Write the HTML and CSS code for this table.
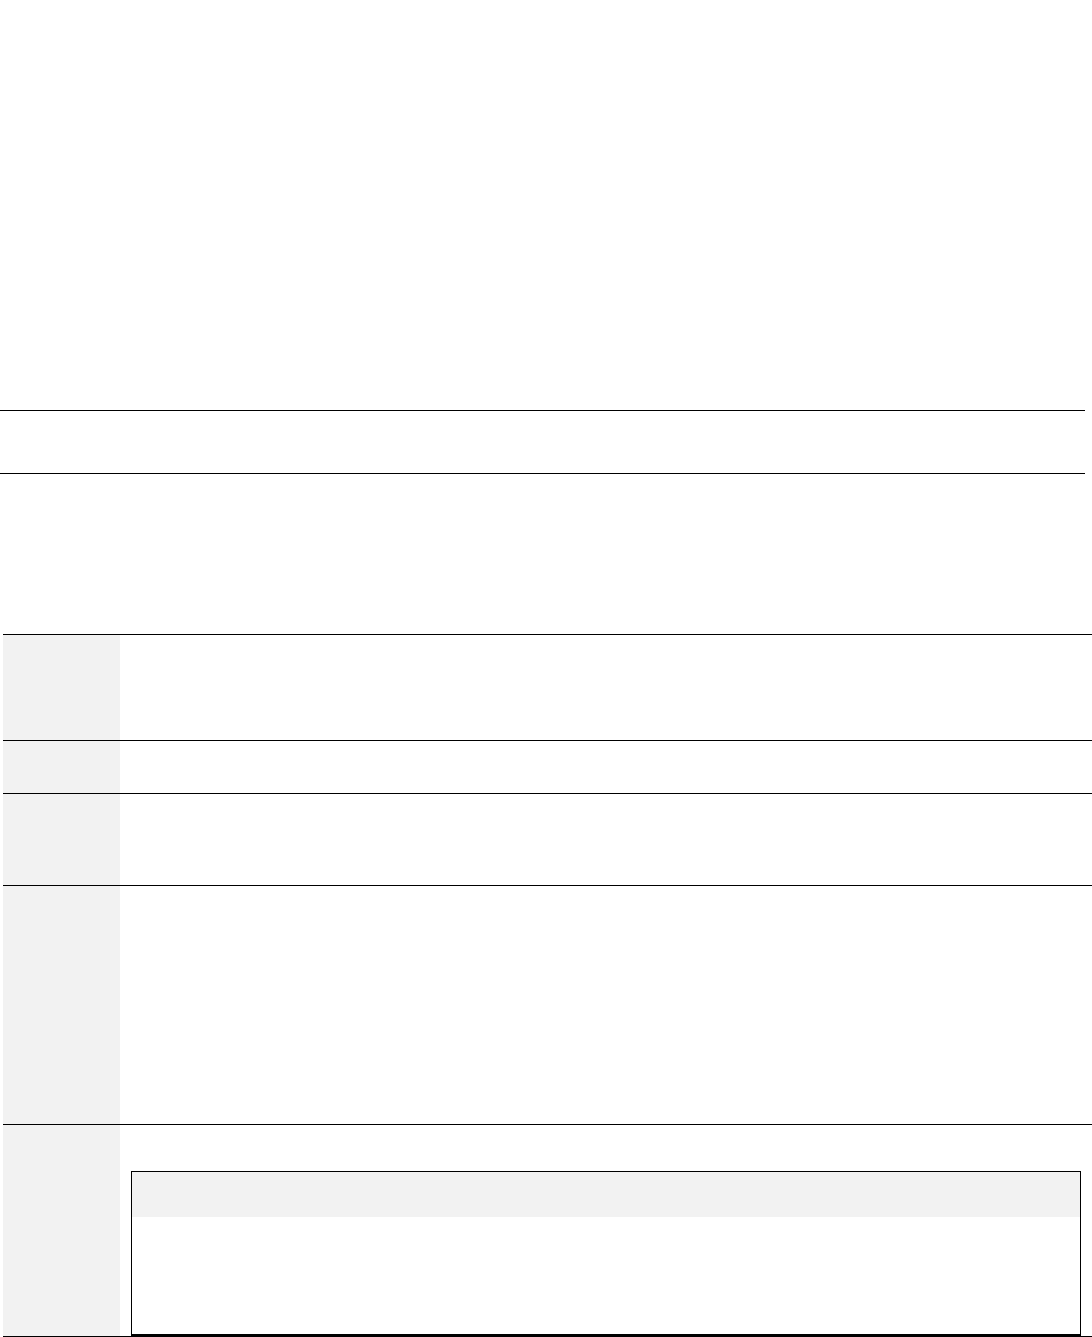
FILE: index.html
```html
<!DOCTYPE html>
<html lang="en">
  <head>
    <meta charset="UTF-8" />
    <meta name="viewport" content="width=device-width, initial-scale=1.0" />
    <title>Details</title>
    <link rel="stylesheet" href="styles.css">
  </head>
  <body>
    <div class="page-top"></div>

    <div class="summary-bar"></div>

    <div class="details">
      <div class="row row-a">
        <div class="label"></div>
        <div class="value"></div>
      </div>
      <div class="row row-b">
        <div class="label"></div>
        <div class="value"></div>
      </div>
      <div class="row row-c">
        <div class="label"></div>
        <div class="value"></div>
      </div>
      <div class="row row-d">
        <div class="label"></div>
        <div class="value"></div>
      </div>
      <div class="row row-e">
        <div class="label"></div>
        <div class="value">
          <div class="panel">
            <div class="panel-head"></div>
            <div class="panel-body"></div>
          </div>
        </div>
      </div>
    </div>
  </body>
</html>
```

FILE: styles.css
```css
body {
  margin: 0;
  background-color: #ffffff;
  font-family: "Liberation Sans", Arial, sans-serif;
  color: #000;
}

.page-top {
  height: 410px;
}

.summary-bar {
  width: 1085px;
  height: 62px;
  border-top: 1px solid #000;
  border-bottom: 1px solid #000;
}

.details {
  margin: 160px 0 0 3px;
  width: 1089px;
}

.row {
  display: flex;
  border-top: 1px solid #000;
  box-sizing: border-box;
}

.row-a { height: 106px; }
.row-b { height: 53px; }
.row-c { height: 92px; }
.row-d { height: 239px; }
.row-e {
  height: 213px;
  border-bottom: 1px solid #000;
}

.label {
  width: 117px;
  background-color: #f2f2f2;
}

.value {
  flex: 1;
}

.row-e .value {
  padding: 46px 10px 0 11px;
}

.panel {
  width: 950px;
  height: 165px;
  box-sizing: border-box;
  border: 1px solid #000;
  border-bottom-width: 2px;
}

.panel-head {
  height: 45px;
  background-color: #f2f2f2;
}
```
